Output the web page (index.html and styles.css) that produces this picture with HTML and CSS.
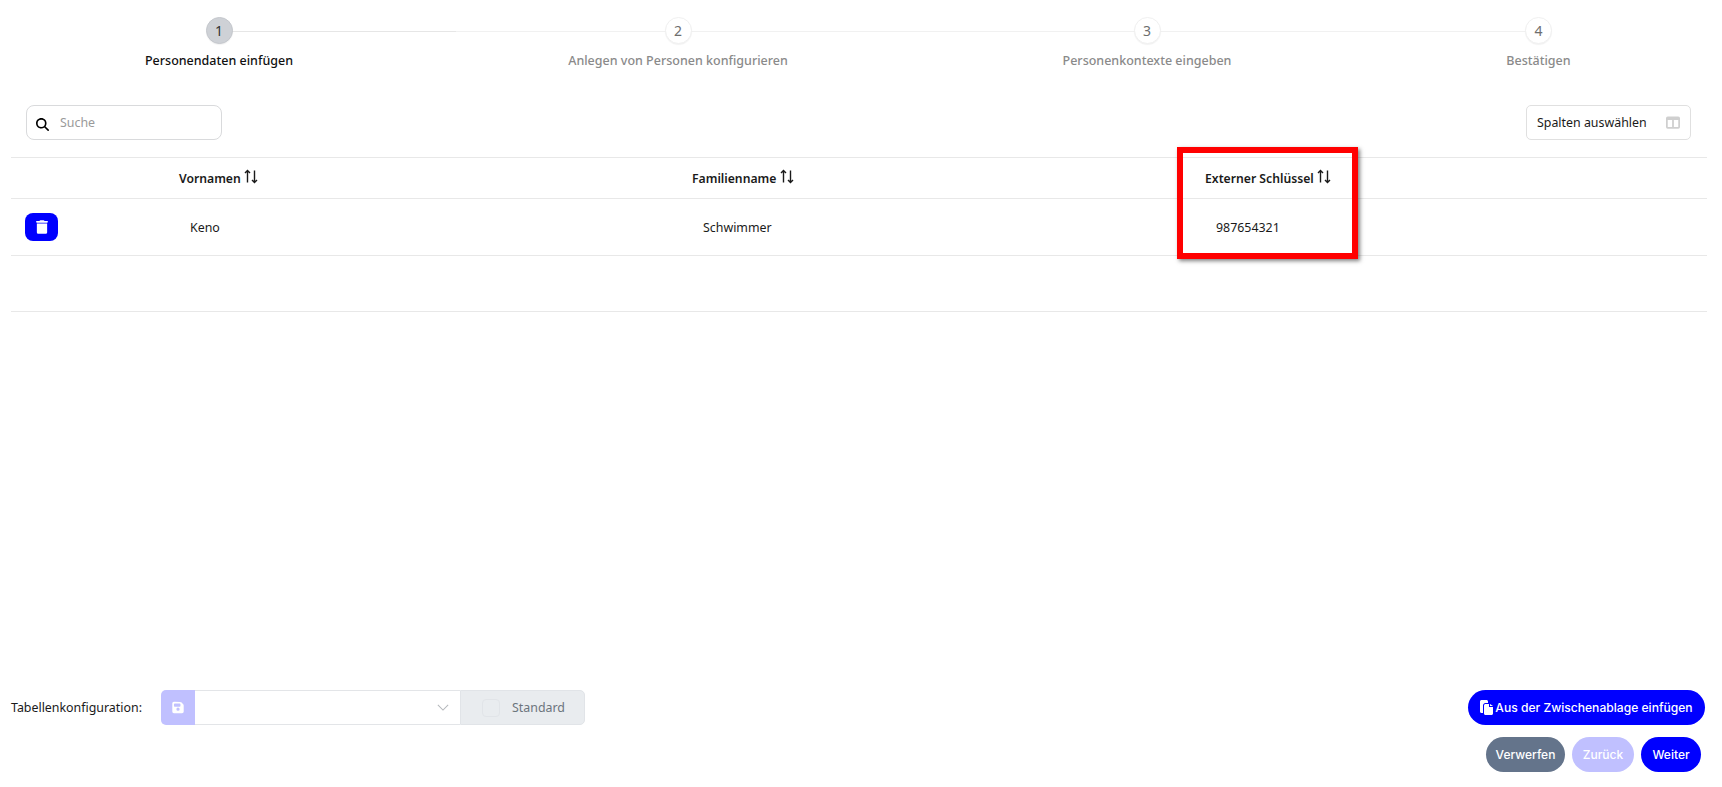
FILE: index.html
```html
<!DOCTYPE html>
<html lang="de">
<head>
    <meta charset="UTF-8">
    <meta name="viewport" content="width=device-width, initial-scale=1.0">
    <title>Personen anlegen</title>
    <link rel="stylesheet" href="styles.css">
</head>
<body>
    <div class="page">
        <div class="steps">
            <div class="step step-1 active"><span class="step-num">1</span><span class="step-label">Personendaten einfügen</span></div>
            <div class="step step-2"><span class="step-num">2</span><span class="step-label">Anlegen von Personen konfigurieren</span></div>
            <div class="step step-3"><span class="step-num">3</span><span class="step-label">Personenkontexte eingeben</span></div>
            <div class="step step-4"><span class="step-num">4</span><span class="step-label">Bestätigen</span></div>
        </div>

        <div class="toolbar">
            <div class="search">
                <svg class="search-icon" viewBox="0 0 512 512"><path d="M416 208c0 46-15 88-40 123l126 126c12 12 12 33 0 45s-33 12-45 0L331 376c-35 25-77 40-123 40C93 416 0 323 0 208S93 0 208 0s208 93 208 208zM208 352a144 144 0 1 0 0-288 144 144 0 1 0 0 288z"/></svg>
                <span class="placeholder">Suche</span>
            </div>
            <button class="columns-btn">
                Spalten auswählen
                <svg class="columns-icon" viewBox="0 0 16 14"><path fill-rule="evenodd" d="M2 0h12a2 2 0 0 1 2 2v10a2 2 0 0 1-2 2H2a2 2 0 0 1-2-2V2a2 2 0 0 1 2-2zm0 4v8h5V4H2zm7 0v8h5V4H9z"/></svg>
            </button>
        </div>

        <div class="table-wrap">
            <table class="data-table">
                <colgroup><col class="col-action"><col class="col-data"><col class="col-data"><col></colgroup>
                <thead>
                    <tr>
                        <th></th>
                        <th>Vornamen <svg class="sort-icon" viewBox="0 0 14 14"><path d="M3.5 13V1.4M1 3.6l2.5-2.5L6 3.6M10.5 1v11.6M8 10.4l2.5 2.5 2.5-2.5"/></svg></th>
                        <th>Familienname <svg class="sort-icon" viewBox="0 0 14 14"><path d="M3.5 13V1.4M1 3.6l2.5-2.5L6 3.6M10.5 1v11.6M8 10.4l2.5 2.5 2.5-2.5"/></svg></th>
                        <th>Externer Schlüssel <svg class="sort-icon" viewBox="0 0 14 14"><path d="M3.5 13V1.4M1 3.6l2.5-2.5L6 3.6M10.5 1v11.6M8 10.4l2.5 2.5 2.5-2.5"/></svg></th>
                    </tr>
                </thead>
                <tbody>
                    <tr class="row-filled">
                        <td>
                            <button class="delete-btn">
                                <svg viewBox="0 0 448 512"><path d="M135 18C140 7 151 0 163 0h122c12 0 23 7 28 18l7 14h96c18 0 32 14 32 32s-14 32-32 32H32C14 96 0 82 0 64s14-32 32-32h96l7-14zM32 128h384v320c0 35-29 64-64 64H96c-35 0-64-29-64-64V128z"/></svg>
                            </button>
                        </td>
                        <td class="cell">Keno</td>
                        <td class="cell">Schwimmer</td>
                        <td class="cell">987654321</td>
                    </tr>
                    <tr class="row-empty"><td colspan="4"></td></tr>
                </tbody>
            </table>
            <div class="highlight"></div>
        </div>

        <div class="footer">
            <div class="config">
                <span class="config-label">Tabellenkonfiguration:</span>
                <div class="config-group">
                    <button class="save-btn">
                        <svg viewBox="0 0 448 512"><path fill-rule="evenodd" d="M64 32C29 32 0 61 0 96v320c0 35 29 64 64 64h320c35 0 64-29 64-64V173c0-17-7-33-19-45l-74-74c-12-12-28-19-45-19L64 32zm0 96c0-18 14-32 32-32h192c18 0 32 14 32 32v64c0 18-14 32-32 32H96c-18 0-32-14-32-32v-64zm160 128a64 64 0 1 1 0 128 64 64 0 1 1 0-128z"/></svg>
                    </button>
                    <div class="config-select">
                        <svg viewBox="0 0 14 8"><path d="M1 1l6 6 6-6"/></svg>
                    </div>
                    <div class="config-default"><span class="fake-check"></span>Standard</div>
                </div>
            </div>
            <div class="actions">
                <button class="pill pill-primary pill-wide">
                    <svg viewBox="0 0 14 15"><path d="M1.500 0h5C7.300 0 8 .7 8 1.500V3H5.500C4.100 3 3 4.100 3 5.500V13H1.500C.7 13 0 12.300 0 11.500v-10C0 .7.7 0 1.500 0z"/><path d="M5.500 4H9v3h4v6.500c0 .8-.7 1.500-1.500 1.500h-6c-.8 0-1.500-.7-1.500-1.500v-8C4 4.700 4.700 4 5.500 4zM10 4l3 2h-3V4z"/></svg>
                    Aus der Zwischenablage einfügen
                </button>
                <div class="actions-row">
                    <button class="pill pill-grey">Verwerfen</button>
                    <button class="pill pill-disabled">Zurück</button>
                    <button class="pill pill-primary">Weiter</button>
                </div>
            </div>
        </div>
    </div>
</body>
</html>
```

FILE: styles.css
```css
html, body {
    margin: 0;
    height: 100%;
    background-color: #fff;
    color: #1a1a1a;
    font-family: 'Noto Sans', sans-serif;
    font-size: 12.4px;
    overflow: hidden;
}
button {
    font-family: inherit;
    cursor: pointer;
}
.page {
    display: flex;
    flex-direction: column;
    height: 100%;
    box-sizing: border-box;
    padding-bottom: 15px;
}

/* stepper */
.steps {
    display: flex;
    position: relative;
    padding-top: 17px;
    height: 105px;
    box-sizing: border-box;
}
.steps::before {
    content: '';
    position: absolute;
    left: 219px;
    top: 31px;
    width: 1318px;
    height: 1px;
    background: linear-gradient(to right, #e6e6e6 0, #e6e6e6 237px, #f1f1f1 237px, #f1f1f1 100%);
}
.step {
    display: flex;
    flex-direction: column;
    align-items: center;
    position: relative;
}
.step-1 { width: 438px; }
.step-2 { width: 480px; }
.step-3 { width: 458px; }
.step-4 { width: 325px; }
.step-num {
    display: flex;
    align-items: center;
    justify-content: center;
    width: 27px;
    height: 27px;
    border-radius: 50%;
    background-color: #fff;
    border: 1px solid #f0f0f0;
    box-sizing: border-box;
    box-shadow: 0 1px 1px rgba(0, 0, 0, 0.05);
    font-size: 14px;
    color: #6e6e6e;
}
.step-label {
    margin-top: 8px;
    line-height: 17px;
    font-size: 12.5px;
    font-weight: 500;
    color: #8a8a8a;
}
.active .step-num {
    background-color: #ced1d6;
    border-color: #c4c7cc;
    color: #333;
}
.active .step-label {
    color: #111;
}

/* toolbar */
.toolbar {
    display: flex;
    justify-content: space-between;
    padding: 0 31px 0 26px;
    height: 52px;
}
.search {
    display: flex;
    align-items: center;
    width: 196px;
    height: 35px;
    box-sizing: border-box;
    border: 1px solid #d9dadc;
    border-radius: 8px;
    padding-left: 9px;
}
.search-icon {
    width: 13px;
    height: 13px;
    margin-top: 3px;
}
.placeholder {
    margin-left: 11px;
    color: #9a9a9a;
}
.columns-btn {
    display: flex;
    align-items: center;
    justify-content: space-between;
    width: 165px;
    height: 35px;
    box-sizing: border-box;
    padding: 0 10px;
    background-color: #fff;
    border: 1px solid #e0e0e0;
    border-radius: 5px;
    color: #1a1a1a;
    font-size: 12.4px;
}
.columns-icon {
    width: 14px;
    height: 13px;
    fill: #cfcfcf;
}

/* table */
.table-wrap {
    position: relative;
    margin: 0 15px 0 11px;
}
.data-table {
    width: 100%;
    border-collapse: collapse;
    table-layout: fixed;
    border-top: 1px solid #e8e8e8;
}
.col-action { width: 157px; }
.col-data { width: 513px; }
.data-table th {
    height: 40px;
    padding: 0 0 0 11px;
    text-align: left;
    font-size: 12.2px;
    font-weight: 600;
    color: #1a1a1a;
    border-bottom: 1px solid #e8e8e8;
}
.data-table td {
    padding: 0;
    border-bottom: 1px solid #e8e8e8;
}
.row-filled td { height: 56px; }
.row-empty td { height: 55px; }
.data-table .cell {
    padding-left: 22px;
}
.sort-icon {
    width: 14px;
    height: 15px;
    vertical-align: -1px;
    fill: none;
    stroke: #1a1a1a;
    stroke-width: 1.4;
}
.delete-btn {
    display: flex;
    align-items: center;
    justify-content: center;
    width: 33px;
    height: 28px;
    margin-left: 14px;
    padding: 0;
    border: none;
    border-radius: 8px;
    background-color: #0000ff;
}
.delete-btn svg {
    width: 12px;
    height: 14px;
    fill: #fff;
}
.highlight {
    position: absolute;
    left: 1166px;
    top: -10px;
    width: 181px;
    height: 112px;
    box-sizing: border-box;
    border: 6px solid #ff0000;
    box-shadow: 2px 2px 4px rgba(0, 0, 0, 0.5);
}

/* footer */
.footer {
    display: flex;
    justify-content: space-between;
    align-items: flex-start;
    margin-top: auto;
    padding: 0 17px 0 11px;
}
.config {
    display: flex;
    align-items: center;
}
.config-label {
    width: 150px;
}
.config-group {
    display: flex;
    width: 424px;
    height: 35px;
}
.save-btn {
    display: flex;
    align-items: center;
    justify-content: center;
    width: 34px;
    padding: 0;
    border: none;
    border-radius: 5px 0 0 5px;
    background-color: #c0c0ff;
}
.save-btn svg {
    width: 12px;
    height: 13px;
    fill: #fff;
}
.config-select {
    display: flex;
    align-items: center;
    justify-content: flex-end;
    flex: 1;
    padding-right: 11px;
    border: 1px solid #e3e5e8;
    border-width: 1px 0;
}
.config-select svg {
    width: 12px;
    height: 7px;
    fill: none;
    stroke: #b5b8bc;
    stroke-width: 1.2;
}
.config-default {
    display: flex;
    align-items: center;
    width: 125px;
    box-sizing: border-box;
    padding-left: 21px;
    background-color: #e9ecef;
    border: 1px solid #e1e4e8;
    border-radius: 0 5px 5px 0;
    color: #6c757d;
}
.fake-check {
    width: 16px;
    height: 16px;
    margin-right: 12px;
    border: 1px solid #e1e4e8;
    border-radius: 4px;
}
.actions {
    display: flex;
    flex-direction: column;
    align-items: flex-end;
    gap: 12px;
}
.actions-row {
    display: flex;
    gap: 7px;
    margin-right: 4px;
}
.pill {
    display: flex;
    align-items: center;
    justify-content: center;
    height: 35px;
    padding: 0;
    border: none;
    border-radius: 18px;
    font-family: 'Inter', sans-serif;
    font-size: 12px;
    font-weight: 500;
    color: #fff;
}
.pill svg {
    width: 14px;
    height: 15px;
    margin-right: 1px;
    fill: #fff;
}
.pill-wide { width: 237px; font-size: 12.1px; }
.pill-primary { background-color: #0000ff; }
.pill-grey { background-color: #64748b; width: 79px; }
.pill-disabled { background-color: #c0c0ff; width: 62px; }
.actions-row .pill-primary { width: 60px; }
```
